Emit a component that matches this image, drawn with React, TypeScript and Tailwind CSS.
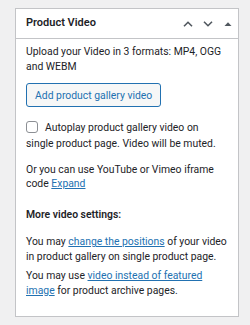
import React from "react";

function ChevronUp() {
  return (
    <svg width="10" height="6" viewBox="0 0 10 6" fill="none">
      <path d="M1 5.2 5 1.3l4 3.9" stroke="#50575e" strokeWidth="1.6" />
    </svg>
  );
}

function ChevronDown() {
  return (
    <svg width="10" height="6" viewBox="0 0 10 6" fill="none">
      <path d="M1 0.8 5 4.7l4-3.9" stroke="#50575e" strokeWidth="1.6" />
    </svg>
  );
}

function Caret() {
  return (
    <svg width="8" height="4" viewBox="0 0 8 4">
      <path d="M4 0.2 7.5 4H0.5z" fill="#50575e" />
    </svg>
  );
}

export default function App() {
  return (
    <div className="min-h-[325px] w-[250px] bg-[#f0f0f1] pt-[8px] pl-[15px] font-[Roboto,sans-serif] text-[#1d2327]">
      <div className="w-[224px] border border-[#c3c4c7] bg-white">
        <div className="flex h-[30px] items-center justify-between border-b border-[#c3c4c7] pl-[10px]">
          <h2 className="text-[11px] font-semibold">Product Video</h2>
          <div className="flex items-center">
            <span className="flex w-[20px] justify-center">
              <ChevronUp />
            </span>
            <span className="flex w-[20px] justify-center">
              <ChevronDown />
            </span>
            <span className="flex w-[20px] justify-center pt-[1px]">
              <Caret />
            </span>
          </div>
        </div>
        <div className="pt-[5px] pr-[8px] pb-[18px] pl-[10px] text-[10.4px] leading-[15px]">
          <p>Upload your Video in 3 formats: MP4, OGG and WEBM</p>
          <button className="mt-[9px] h-[24px] rounded-[3px] border border-[#2271b1] bg-[#f6f7f7] px-[8px] text-[10.4px] text-[#2271b1]">
            Add product gallery video
          </button>
          <label className="mt-[12px] block pr-[10px] leading-[16px]">
            <span className="mr-[7px] inline-block h-[12px] w-[12px] translate-y-[2px] rounded-[3px] border border-[#8c8f94] bg-white" />
            Autoplay product gallery video on single product page. Video will be muted.
          </label>
          <p className="mt-[11px] leading-[14px]">
            Or you can use YouTube or Vimeo iframe code{" "}
            <a href="#" className="text-[#2271b1] underline">Expand</a>
          </p>
          <p className="mt-[16px] font-semibold">More video settings:</p>
          <p className="mt-[12px]">
            You may{" "}
            <a href="#" className="text-[#2271b1] underline">change the positions</a>{" "}
            of your video in product gallery on single product page.
          </p>
          <p className="mt-[4px]">
            You may use{" "}
            <a href="#" className="text-[#2271b1] underline">video instead of featured image</a>{" "}
            for product archive pages.
          </p>
        </div>
      </div>
    </div>
  );
}
